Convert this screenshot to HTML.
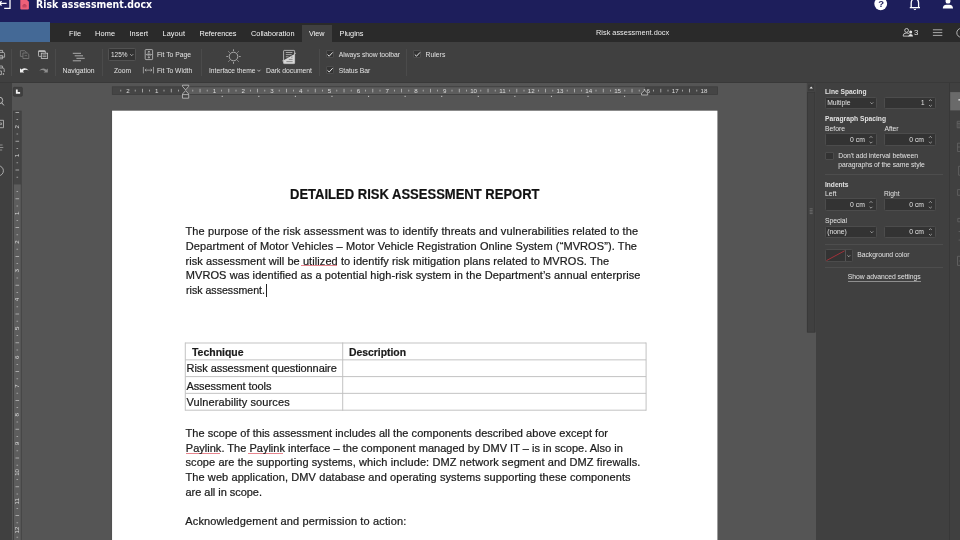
<!DOCTYPE html>
<html lang="en">
<head>
<meta charset="utf-8">
<title>Risk assessment.docx</title>
<style>
html,body{margin:0;padding:0;width:960px;height:540px;overflow:hidden;background:#555555;}
body{position:relative;font-family:"Liberation Sans",sans-serif;font-size:7.33px;color:#e2e2e2;}
#root{position:absolute;left:0;top:0;width:960px;height:540px;overflow:hidden;will-change:transform;}
.abs,.t,.box{position:absolute;}
.t,.doc{transform-origin:0 50%;}
.t{white-space:nowrap;line-height:10px;height:10px;margin-top:-5px;}
.b{font-weight:bold;}
#topbar{left:0;top:0;width:960px;height:22.5px;background:#1d1e5b;}
#tabbar{left:0;top:22.5px;width:960px;height:19.5px;background:#2a2a2a;}
#blue{left:0;top:22.2px;width:50.2px;height:19.8px;background:#446996;}
#toolbar{left:0;top:42px;width:960px;height:39.6px;background:#404040;border-bottom:1.1px solid #393939;}
#activetab{left:302px;top:25px;width:30px;height:17px;background:#404040;}
#leftbar{left:0;top:82.7px;width:11.7px;height:457px;background:#404040;}
#rpanel{left:816px;top:82.7px;width:133px;height:457px;background:#404040;}
#rbar{left:949px;top:82.7px;width:11px;height:457px;background:#404040;border-left:1px solid #383838;}
#page{left:112px;top:111px;width:605.3px;height:429px;background:#ffffff;}
.sep{position:absolute;width:1px;background:#4b4b4b;top:49px;height:26.5px;}
.doc{position:absolute;white-space:nowrap;color:#1c1c1c;-webkit-text-stroke:0.22px #1b1b1b;font-size:11.5px;line-height:15px;height:15px;margin-top:-7.5px;}
.inp{position:absolute;background:#333333;border:1px solid #4c4c4c;border-radius:1.3px;box-sizing:border-box;height:12.6px;}
.hr{position:absolute;height:1px;background:#4d4d4d;left:825px;width:118px;}
.cb{position:absolute;width:8.2px;height:8.2px;box-sizing:border-box;background:#333;border:1px solid #4c4c4c;border-radius:1px;}
</style>
</head>
<body>
<div id="root">
<div id="topbar" class="abs"></div>
<div id="tabbar" class="abs"></div>
<div id="blue" class="abs"></div>
<div id="toolbar" class="abs"></div>
<div id="activetab" class="abs"></div>
<div id="leftbar" class="abs"></div>
<div id="rpanel" class="abs"></div>
<div id="rbar" class="abs"></div>
<svg class="abs" style="left:0;top:0" width="960" height="540" viewBox="0 0 960 540"><rect x="111.7" y="110.3" width="606.1" height="440" fill="#4b4b4b"/><rect x="112.05" y="110.65" width="605.4" height="440" fill="#ffffff"/></svg>
<!-- toolbar separators -->
<div class="sep" style="left:11px"></div>
<div class="sep" style="left:55px"></div>
<div class="sep" style="left:102px"></div>
<div class="sep" style="left:201.3px"></div>
<div class="sep" style="left:319px"></div>
<div class="sep" style="left:405.5px"></div>
<!-- zoom combobox -->
<div class="inp" style="left:108.4px;top:48.2px;width:27.5px;height:13.2px;background:#333;border-color:#525252;"></div>
<!-- toolbar checkboxes -->
<div class="cb" style="left:325.6px;top:50.2px"></div>
<div class="cb" style="left:325.6px;top:66px"></div>
<div class="cb" style="left:413px;top:50.2px"></div>
<!-- right panel inputs -->
<div class="inp" style="left:825px;top:96.6px;width:51.6px"></div>
<div class="inp" style="left:884.4px;top:96.6px;width:51.6px"></div>
<div class="inp" style="left:825px;top:133.4px;width:51.6px"></div>
<div class="inp" style="left:884.4px;top:133.4px;width:51.6px"></div>
<div class="cb" style="left:825.4px;top:151.5px"></div>
<div class="hr" style="top:174.3px"></div>
<div class="inp" style="left:825px;top:198.4px;width:51.6px"></div>
<div class="inp" style="left:884.4px;top:198.4px;width:51.6px"></div>
<div class="inp" style="left:825px;top:225.6px;width:51.6px"></div>
<div class="inp" style="left:884.4px;top:225.6px;width:51.6px"></div>
<div class="hr" style="top:244.3px"></div>
<div class="inp" style="left:825px;top:249.4px;width:27.6px;height:12.6px"></div>
<div class="abs" style="left:845.3px;top:250.4px;width:1px;height:10.6px;background:#555"></div>
<div class="hr" style="top:267.2px"></div>
<div class="abs" style="left:847.8px;top:280.8px;width:72.9px;height:0.7px;background:#8e8e8e"></div>
<!-- table -->
<svg class="abs" style="left:0;top:0" width="960" height="540" viewBox="0 0 960 540" fill="none" stroke="#c0c0c0" stroke-width="0.95">
<path d="M185.3 343 H646.1 M185.3 359.85 H646.1 M185.3 376.6 H646.1 M185.3 393.35 H646.1 M185.3 410.2 H646.1 M185.3 342.5 V410.7 M342.7 342.5 V410.7 M646.1 342.5 V410.7"/>
</svg>
<!-- spelling underlines + caret -->
<div class="abs" style="left:301.2px;top:264.8px;width:35.8px;height:1px;background:#e8858e;"></div>
<div class="abs" style="left:185.5px;top:452.6px;width:34.5px;height:1px;background:#e8858e;"></div>
<div class="abs" style="left:248px;top:452.6px;width:34.5px;height:1px;background:#e8858e;"></div>
<div class="abs" style="left:265.8px;top:283.6px;width:1px;height:13.6px;background:#222;"></div>
<svg class="abs" style="left:0;top:0" width="960" height="540" viewBox="0 0 960 540" fill="none" stroke-linecap="butt">
<!-- top bar: back icon -->
<path d="M-1 3.4 H6.6 M1.6 1.2 L-0.8 3.4 L1.6 5.6" stroke="#ffffff" stroke-width="1.3"/>
<path d="M10 -1 V8.4 H4.2" stroke="#ffffff" stroke-width="1.3"/>
<!-- doc icon -->
<path d="M20.3 -1 H26 L28.9 1.8 V8.4 Q28.9 9.4 27.9 9.4 H21.3 Q20.3 9.4 20.3 8.4 Z" fill="#ee6079"/>
<path d="M23.4 4.5 H25.6 M22.4 5.7 H26.6 M22.4 6.9 H26.6" stroke="#a83450" stroke-width="0.75"/>
<!-- help -->
<circle cx="880.7" cy="3.8" r="6.4" fill="#ffffff"/>
<!-- bell -->
<path d="M911.2 7.6 V3.2 Q911.2 -1.2 914.9 -1.2 Q918.6 -1.2 918.6 3.2 V7.6 M909.8 7.7 H920" stroke="#ffffff" stroke-width="1.3"/>
<path d="M913.7 9 Q914.9 10.4 916.1 9" stroke="#ffffff" stroke-width="1"/>
<!-- user -->
<path d="M942.8 8.6 Q942.8 4.8 946.5 4.8 H949.3 Q953 4.8 953 8.6 Z" fill="#ffffff"/>
<rect x="945.6" y="-2" width="4.8" height="5.6" rx="2.2" fill="#ffffff"/>
<!-- tab bar: users -->
<circle cx="906.6" cy="30.4" r="1.9" stroke="#e4e4e4" stroke-width="0.8"/>
<path d="M903.3 36.2 V35.2 Q903.3 33 906.6 33 Q908.4 33 909.2 33.7 M903.3 36.1 H909" stroke="#e4e4e4" stroke-width="0.8"/>
<circle cx="910.7" cy="31.9" r="1.5" fill="#e4e4e4"/>
<path d="M908.4 36.5 Q908.4 34 910.7 34 Q913 34 913 36.5 Z" fill="#e4e4e4"/>
<!-- hamburger -->
<path d="M932.9 29.8 H942.3 M932.9 32.6 H942.3 M932.9 35.4 H942.3" stroke="#b8b8b8" stroke-width="0.9"/>
<circle cx="961.2" cy="32.8" r="4.4" stroke="#c4c4c4" stroke-width="0.9"/>
<!-- toolbar: print (partial) -->
<path d="M-1 52.4 H3.2 Q4.6 52.4 4.6 53.8 V57.2 H-1 M-1 50.4 H2.6 V52.4 M-1 55.6 H2.6 V58.8 H-1" stroke="#bdbdbd" stroke-width="0.8"/>
<path d="M-1 68 H2.8 Q4.2 68 4.2 69.4 V72 M-1 66 H2.4 V68 M-1 71 H1.4 V74.6 H-1" stroke="#bdbdbd" stroke-width="0.8"/>
<circle cx="3.4" cy="74" r="0.8" fill="#d0d0d0"/>
<!-- copy (dim) -->
<path d="M20.4 50.7 H24.8 L26.2 52.1 V56.4 H20.4 Z" stroke="#7c7c7c" stroke-width="0.8"/>
<path d="M22.9 53 H27.4 L28.8 54.4 V58.5 H22.9 Z" fill="#404040" stroke="#7c7c7c" stroke-width="0.8"/>
<path d="M24.6 55.6 H27" stroke="#7c7c7c" stroke-width="0.7"/>
<!-- paste -->
<rect x="38.5" y="50.6" width="6.8" height="5.8" rx="0.6" stroke="#c6c6c6" stroke-width="0.8"/>
<path d="M38.5 51.4 H45.3" stroke="#c6c6c6" stroke-width="1"/>
<rect x="41.3" y="53.2" width="6.3" height="5.3" fill="#404040" stroke="#c6c6c6" stroke-width="0.8"/>
<path d="M42.6 55 H46.4 M42.6 56.6 H46.4" stroke="#c6c6c6" stroke-width="0.7"/>
<!-- undo -->
<path d="M20 72.4 V68.2 L21.4 69.6 Q25.4 66.4 28.6 70.6 Q25.6 68.6 22.8 71 L24.2 72.4 Z" fill="#f0f0f0"/>
<!-- redo (dim) -->
<path d="M47.8 72.6 V68.4 L46.4 69.8 Q42.4 66.6 39.2 70.8 Q42.2 68.8 45 71.2 L43.6 72.6 Z" fill="#8c8c8c"/>
<!-- navigation -->
<path d="M72.8 53.3 H81 M74.7 55.8 H83 M76.4 58.3 H84.7 M72.8 60.8 H81" stroke="#cfcfcf" stroke-width="0.75"/>
<!-- zoom chevron -->
<path d="M130.2 54.2 L131.7 55.7 L133.2 54.2" stroke="#d0d0d0" stroke-width="0.7"/>
<!-- fit to page -->
<rect x="145.2" y="49.6" width="7.4" height="10" rx="0.7" stroke="#c4c4c4" stroke-width="0.8"/>
<path d="M148.9 51 V58.2 M146.4 54.6 H151.4" stroke="#c4c4c4" stroke-width="0.7"/>
<path d="M147.8 52.2 L148.9 51 L150 52.2 M147.8 57 L148.9 58.2 L150 57 M147.4 53.6 L146.4 54.6 L147.4 55.6 M150.4 53.6 L151.4 54.6 L150.4 55.6" stroke="#c4c4c4" stroke-width="0.65"/>
<!-- fit to width -->
<path d="M143.4 66.9 V73.4 M153.5 66.9 V73.4 M145 70.15 H152 M146.3 68.9 L145 70.15 L146.3 71.4 M150.7 68.9 L152 70.15 L150.7 71.4" stroke="#bcbcbc" stroke-width="0.7"/>
<!-- sun -->
<circle cx="233.5" cy="56.5" r="4.3" stroke="#cccccc" stroke-width="0.75"/>
<path d="M233.5 49.3 V51 M233.5 62 V63.8 M226.3 56.5 H228 M239 56.5 H240.7 M228.4 51.4 L229.6 52.6 M237.4 60.4 L238.6 61.6 M228.4 61.6 L229.6 60.4 M237.4 52.6 L238.6 51.4" stroke="#cccccc" stroke-width="0.7"/>
<path d="M257.4 69.8 L258.9 71.4 L260.4 69.8" stroke="#d4d4d4" stroke-width="0.75"/>
<!-- dark document -->
<path d="M294.6 53.9 V63.6 H283.6 V60.2 Z" fill="#d6d6d6"/>
<rect x="283.6" y="50.4" width="11" height="13.2" rx="0.7" stroke="#cdcdcd" stroke-width="0.8"/>
<path d="M285.8 52.5 H292.4 M285.8 54.6 H291.6 M285.8 56.8 H288.6" stroke="#d0d0d0" stroke-width="0.7"/>
<path d="M286.4 61.6 H292.6 M288.8 59.4 H292.6 M291 57.1 H292.6" stroke="#555555" stroke-width="0.6"/>
<path d="M294.4 53.6 L296 53.2 M283.6 60.4 L282.2 61" stroke="#cdcdcd" stroke-width="0.7"/>
<!-- checks -->
<path d="M327.5 54.6 L329.2 56.2 L332.7 52.4" stroke="#f4f4f4" stroke-width="0.9"/>
<path d="M327.5 70.4 L329.2 72 L332.7 68.2" stroke="#f4f4f4" stroke-width="0.9"/>
<path d="M414.8 54.6 L416.5 56.2 L420 52.4" stroke="#f4f4f4" stroke-width="0.9"/>
<!-- left sidebar icons -->
<circle cx="-0.6" cy="100.4" r="3.3" stroke="#c4c4c4" stroke-width="0.9"/>
<path d="M1.7 102.8 L3.9 105.4" stroke="#c4c4c4" stroke-width="1"/>
<path d="M-1 120.3 H3.5 V127.7 H-1" stroke="#bcbcbc" stroke-width="0.8"/>
<path d="M0 123 H1.6 V124.6 H0" stroke="#bcbcbc" stroke-width="0.7"/>
<path d="M-1 145 H2.6 M-1 147.5 H3.3 M-1 150 H2.2" stroke="#b0b0b0" stroke-width="0.7"/>
<circle cx="-1.6" cy="170.8" r="5" stroke="#c4c4c4" stroke-width="0.8"/>
<!-- right sidebar -->
<rect x="950.2" y="92.1" width="10" height="18.3" fill="#6a6a6a"/>
<path d="M958.4 99.8 H961" stroke="#f0f0f0" stroke-width="1.2"/>
<path d="M961 121.3 H957.2 V127.8 H961 M957.2 123.3 H961 M959 123.3 V127.8" stroke="#6c6c6c" stroke-width="0.7"/>
<path d="M961 143.2 H957.6 V151.5 H961 M957.6 147 H961" stroke="#6c6c6c" stroke-width="0.7"/>
<path d="M961 166.3 H958.6 V175.2 H961" stroke="#6c6c6c" stroke-width="0.7"/>
<path d="M961 189.6 H957.6 V195.3 H961" stroke="#6c6c6c" stroke-width="0.7"/>
<path d="M961 218.4 H957.8 V221.8 H961" stroke="#6c6c6c" stroke-width="0.7"/>
<path d="M958.6 231.5 H961 M958.6 240.1 H961" stroke="#6c6c6c" stroke-width="0.7"/>
<path d="M961 256.3 H957.5 V265.4 H961 M958.8 261 H961" stroke="#6c6c6c" stroke-width="0.7"/>
<!-- scrollbar -->
<rect x="806.8" y="83" width="9" height="249.4" fill="#404040"/>
<rect x="807.6" y="83.9" width="7.1" height="7.3" fill="#3c3c3c" stroke="#4a4a4a" stroke-width="0.6"/>
<path d="M809.5 88.5 L811.2 86.5 L812.9 88.5 Z" fill="#e6e6e6"/>
<rect x="807.6" y="92.5" width="7.1" height="239.6" fill="#404040" stroke="#383838" stroke-width="0.7"/>
<path d="M809.6 208.8 H812.7 M809.6 210.4 H812.7 M809.6 212 H812.7 M809.6 213.6 H812.7" stroke="#787878" stroke-width="0.7"/>
<!-- panel spinners / combos arrows -->
<g stroke="#c8c8c8" stroke-width="0.7">
<path d="M870.4 102.4 L871.8 103.8 L873.2 102.4"/>
<path d="M870.4 231.4 L871.8 232.8 L873.2 231.4"/>
<path d="M847.4 255.3 L848.8 256.7 L850.2 255.3"/>
<path d="M929 101 L930.4 99.6 L931.8 101 M929 105 L930.4 106.4 L931.8 105"/>
<path d="M869.6 137.8 L871 136.4 L872.4 137.8 M869.6 141.8 L871 143.2 L872.4 141.8"/>
<path d="M929 137.8 L930.4 136.4 L931.8 137.8 M929 141.8 L930.4 143.2 L931.8 141.8"/>
<path d="M869.6 202.8 L871 201.4 L872.4 202.8 M869.6 206.8 L871 208.2 L872.4 206.8"/>
<path d="M929 202.8 L930.4 201.4 L931.8 202.8 M929 206.8 L930.4 208.2 L931.8 206.8"/>
<path d="M929 230 L930.4 228.6 L931.8 230 M929 234 L930.4 235.4 L931.8 234"/>
</g>
<!-- no-color swatch -->
<path d="M826.4 260.6 L844.6 250.8" stroke="#d0303c" stroke-width="0.7"/>
</svg>
<div class="t" style="left:878.2px;top:3.9px;font-size:9.5px;font-weight:bold;color:#1e1f5b;">?</div>
<svg class="abs" style="left:0;top:0" width="960" height="540" viewBox="0 0 960 540" font-family="Liberation Sans, sans-serif" font-size="6.2" fill="#dadada" text-anchor="middle">
<rect x="112.3" y="86.8" width="605.3" height="7.6" fill="#454545"/>
<rect x="185.6" y="86.8" width="459.4" height="7.6" fill="#5d5d5d"/>
<rect x="112.3" y="86.8" width="605.3" height="7.6" fill="none" stroke="#3e3e3e" stroke-width="0.8"/>
<rect x="120.40" y="89.7" width="0.8" height="1.8" fill="#c2c2c2" opacity="0.9"/>
<text x="128.0" y="92.8">2</text>
<rect x="134.80" y="89.7" width="0.8" height="1.8" fill="#c2c2c2" opacity="0.9"/>
<rect x="142.05" y="88.8" width="0.75" height="3.6" fill="#c2c2c2"/>
<rect x="149.20" y="89.7" width="0.8" height="1.8" fill="#c2c2c2" opacity="0.9"/>
<text x="156.8" y="92.8">1</text>
<rect x="163.60" y="89.7" width="0.8" height="1.8" fill="#c2c2c2" opacity="0.9"/>
<rect x="170.85" y="88.8" width="0.75" height="3.6" fill="#c2c2c2"/>
<rect x="178.00" y="89.7" width="0.8" height="1.8" fill="#c2c2c2" opacity="0.9"/>
<rect x="192.40" y="89.7" width="0.8" height="1.8" fill="#c2c2c2" opacity="0.9"/>
<rect x="199.65" y="88.8" width="0.75" height="3.6" fill="#c2c2c2"/>
<rect x="206.80" y="89.7" width="0.8" height="1.8" fill="#c2c2c2" opacity="0.9"/>
<text x="214.4" y="92.8">1</text>
<rect x="221.20" y="89.7" width="0.8" height="1.8" fill="#c2c2c2" opacity="0.9"/>
<rect x="228.45" y="88.8" width="0.75" height="3.6" fill="#c2c2c2"/>
<rect x="235.60" y="89.7" width="0.8" height="1.8" fill="#c2c2c2" opacity="0.9"/>
<text x="243.2" y="92.8">2</text>
<rect x="250.00" y="89.7" width="0.8" height="1.8" fill="#c2c2c2" opacity="0.9"/>
<rect x="257.25" y="88.8" width="0.75" height="3.6" fill="#c2c2c2"/>
<rect x="264.40" y="89.7" width="0.8" height="1.8" fill="#c2c2c2" opacity="0.9"/>
<text x="272.0" y="92.8">3</text>
<rect x="278.80" y="89.7" width="0.8" height="1.8" fill="#c2c2c2" opacity="0.9"/>
<rect x="286.05" y="88.8" width="0.75" height="3.6" fill="#c2c2c2"/>
<rect x="293.20" y="89.7" width="0.8" height="1.8" fill="#c2c2c2" opacity="0.9"/>
<text x="300.8" y="92.8">4</text>
<rect x="307.60" y="89.7" width="0.8" height="1.8" fill="#c2c2c2" opacity="0.9"/>
<rect x="314.85" y="88.8" width="0.75" height="3.6" fill="#c2c2c2"/>
<rect x="322.00" y="89.7" width="0.8" height="1.8" fill="#c2c2c2" opacity="0.9"/>
<text x="329.6" y="92.8">5</text>
<rect x="336.40" y="89.7" width="0.8" height="1.8" fill="#c2c2c2" opacity="0.9"/>
<rect x="343.65" y="88.8" width="0.75" height="3.6" fill="#c2c2c2"/>
<rect x="350.80" y="89.7" width="0.8" height="1.8" fill="#c2c2c2" opacity="0.9"/>
<text x="358.4" y="92.8">6</text>
<rect x="365.20" y="89.7" width="0.8" height="1.8" fill="#c2c2c2" opacity="0.9"/>
<rect x="372.45" y="88.8" width="0.75" height="3.6" fill="#c2c2c2"/>
<rect x="379.60" y="89.7" width="0.8" height="1.8" fill="#c2c2c2" opacity="0.9"/>
<text x="387.2" y="92.8">7</text>
<rect x="394.00" y="89.7" width="0.8" height="1.8" fill="#c2c2c2" opacity="0.9"/>
<rect x="401.25" y="88.8" width="0.75" height="3.6" fill="#c2c2c2"/>
<rect x="408.40" y="89.7" width="0.8" height="1.8" fill="#c2c2c2" opacity="0.9"/>
<text x="416.0" y="92.8">8</text>
<rect x="422.80" y="89.7" width="0.8" height="1.8" fill="#c2c2c2" opacity="0.9"/>
<rect x="430.05" y="88.8" width="0.75" height="3.6" fill="#c2c2c2"/>
<rect x="437.20" y="89.7" width="0.8" height="1.8" fill="#c2c2c2" opacity="0.9"/>
<text x="444.8" y="92.8">9</text>
<rect x="451.60" y="89.7" width="0.8" height="1.8" fill="#c2c2c2" opacity="0.9"/>
<rect x="458.85" y="88.8" width="0.75" height="3.6" fill="#c2c2c2"/>
<rect x="466.00" y="89.7" width="0.8" height="1.8" fill="#c2c2c2" opacity="0.9"/>
<text x="473.6" y="92.8">10</text>
<rect x="480.40" y="89.7" width="0.8" height="1.8" fill="#c2c2c2" opacity="0.9"/>
<rect x="487.65" y="88.8" width="0.75" height="3.6" fill="#c2c2c2"/>
<rect x="494.80" y="89.7" width="0.8" height="1.8" fill="#c2c2c2" opacity="0.9"/>
<text x="502.4" y="92.8">11</text>
<rect x="509.20" y="89.7" width="0.8" height="1.8" fill="#c2c2c2" opacity="0.9"/>
<rect x="516.45" y="88.8" width="0.75" height="3.6" fill="#c2c2c2"/>
<rect x="523.60" y="89.7" width="0.8" height="1.8" fill="#c2c2c2" opacity="0.9"/>
<text x="531.2" y="92.8">12</text>
<rect x="538.00" y="89.7" width="0.8" height="1.8" fill="#c2c2c2" opacity="0.9"/>
<rect x="545.25" y="88.8" width="0.75" height="3.6" fill="#c2c2c2"/>
<rect x="552.40" y="89.7" width="0.8" height="1.8" fill="#c2c2c2" opacity="0.9"/>
<text x="560.0" y="92.8">13</text>
<rect x="566.80" y="89.7" width="0.8" height="1.8" fill="#c2c2c2" opacity="0.9"/>
<rect x="574.05" y="88.8" width="0.75" height="3.6" fill="#c2c2c2"/>
<rect x="581.20" y="89.7" width="0.8" height="1.8" fill="#c2c2c2" opacity="0.9"/>
<text x="588.8" y="92.8">14</text>
<rect x="595.60" y="89.7" width="0.8" height="1.8" fill="#c2c2c2" opacity="0.9"/>
<rect x="602.85" y="88.8" width="0.75" height="3.6" fill="#c2c2c2"/>
<rect x="610.00" y="89.7" width="0.8" height="1.8" fill="#c2c2c2" opacity="0.9"/>
<text x="617.6" y="92.8">15</text>
<rect x="624.40" y="89.7" width="0.8" height="1.8" fill="#c2c2c2" opacity="0.9"/>
<rect x="631.65" y="88.8" width="0.75" height="3.6" fill="#c2c2c2"/>
<rect x="638.80" y="89.7" width="0.8" height="1.8" fill="#c2c2c2" opacity="0.9"/>
<text x="646.4" y="92.8">16</text>
<rect x="653.20" y="89.7" width="0.8" height="1.8" fill="#c2c2c2" opacity="0.9"/>
<rect x="660.45" y="88.8" width="0.75" height="3.6" fill="#c2c2c2"/>
<rect x="667.60" y="89.7" width="0.8" height="1.8" fill="#c2c2c2" opacity="0.9"/>
<text x="675.2" y="92.8">17</text>
<rect x="682.00" y="89.7" width="0.8" height="1.8" fill="#c2c2c2" opacity="0.9"/>
<rect x="689.25" y="88.8" width="0.75" height="3.6" fill="#c2c2c2"/>
<rect x="696.40" y="89.7" width="0.8" height="1.8" fill="#c2c2c2" opacity="0.9"/>
<text x="704.0" y="92.8">18</text>
<rect x="221.68" y="95.8" width="1.1" height="1.2" fill="#bdbdbd"/>
<rect x="258.26" y="95.8" width="1.1" height="1.2" fill="#bdbdbd"/>
<rect x="294.84" y="95.8" width="1.1" height="1.2" fill="#bdbdbd"/>
<rect x="331.42" y="95.8" width="1.1" height="1.2" fill="#bdbdbd"/>
<rect x="368.00" y="95.8" width="1.1" height="1.2" fill="#bdbdbd"/>
<rect x="404.58" y="95.8" width="1.1" height="1.2" fill="#bdbdbd"/>
<rect x="441.16" y="95.8" width="1.1" height="1.2" fill="#bdbdbd"/>
<rect x="477.74" y="95.8" width="1.1" height="1.2" fill="#bdbdbd"/>
<rect x="514.32" y="95.8" width="1.1" height="1.2" fill="#bdbdbd"/>
<rect x="550.90" y="95.8" width="1.1" height="1.2" fill="#bdbdbd"/>
<rect x="587.48" y="95.8" width="1.1" height="1.2" fill="#bdbdbd"/>
<rect x="624.06" y="95.8" width="1.1" height="1.2" fill="#bdbdbd"/>
<path d="M182.5 85.2 H188.7 V86.4 L185.6 89.9 L182.5 86.4 Z" fill="#454545" stroke="#c4c4c4" stroke-width="0.8" stroke-linejoin="round"/>
<path d="M185.6 90.6 L188.7 94 V98.2 H182.5 V94 Z" fill="#454545" stroke="#c4c4c4" stroke-width="0.8" stroke-linejoin="round"/>
<path d="M182.5 94.6 H188.7" stroke="#c4c4c4" stroke-width="0.8"/>
<path d="M644.6 90.3 L647.7 93.2 V95 H641.5 V93.2 Z" fill="#454545" stroke="#c4c4c4" stroke-width="0.8" stroke-linejoin="round"/>
<rect x="13.4" y="111.1" width="7.8" height="428.9" fill="#5d5d5d"/>
<rect x="13.4" y="111.1" width="7.8" height="73.3" fill="#454545"/>
<rect x="13.4" y="111.1" width="7.8" height="433.9" fill="none" stroke="#3e3e3e" stroke-width="0.8"/>
<rect x="15.50" y="112.03" width="3.6" height="0.75" fill="#c2c2c2"/>
<rect x="16.50" y="119.20" width="1.6" height="0.8" fill="#c2c2c2" opacity="0.85"/>
<text transform="translate(19.45 126.8) rotate(-90)" x="0" y="0">2</text>
<rect x="16.50" y="133.60" width="1.6" height="0.8" fill="#c2c2c2" opacity="0.85"/>
<rect x="15.50" y="140.83" width="3.6" height="0.75" fill="#c2c2c2"/>
<rect x="16.50" y="148.00" width="1.6" height="0.8" fill="#c2c2c2" opacity="0.85"/>
<text transform="translate(19.45 155.6) rotate(-90)" x="0" y="0">1</text>
<rect x="16.50" y="162.40" width="1.6" height="0.8" fill="#c2c2c2" opacity="0.85"/>
<rect x="15.50" y="169.63" width="3.6" height="0.75" fill="#c2c2c2"/>
<rect x="16.50" y="176.80" width="1.6" height="0.8" fill="#c2c2c2" opacity="0.85"/>
<rect x="16.50" y="191.20" width="1.6" height="0.8" fill="#c2c2c2" opacity="0.85"/>
<rect x="15.50" y="198.43" width="3.6" height="0.75" fill="#c2c2c2"/>
<rect x="16.50" y="205.60" width="1.6" height="0.8" fill="#c2c2c2" opacity="0.85"/>
<text transform="translate(19.45 213.2) rotate(-90)" x="0" y="0">1</text>
<rect x="16.50" y="220.00" width="1.6" height="0.8" fill="#c2c2c2" opacity="0.85"/>
<rect x="15.50" y="227.23" width="3.6" height="0.75" fill="#c2c2c2"/>
<rect x="16.50" y="234.40" width="1.6" height="0.8" fill="#c2c2c2" opacity="0.85"/>
<text transform="translate(19.45 242.0) rotate(-90)" x="0" y="0">2</text>
<rect x="16.50" y="248.80" width="1.6" height="0.8" fill="#c2c2c2" opacity="0.85"/>
<rect x="15.50" y="256.03" width="3.6" height="0.75" fill="#c2c2c2"/>
<rect x="16.50" y="263.20" width="1.6" height="0.8" fill="#c2c2c2" opacity="0.85"/>
<text transform="translate(19.45 270.8) rotate(-90)" x="0" y="0">3</text>
<rect x="16.50" y="277.60" width="1.6" height="0.8" fill="#c2c2c2" opacity="0.85"/>
<rect x="15.50" y="284.83" width="3.6" height="0.75" fill="#c2c2c2"/>
<rect x="16.50" y="292.00" width="1.6" height="0.8" fill="#c2c2c2" opacity="0.85"/>
<text transform="translate(19.45 299.6) rotate(-90)" x="0" y="0">4</text>
<rect x="16.50" y="306.40" width="1.6" height="0.8" fill="#c2c2c2" opacity="0.85"/>
<rect x="15.50" y="313.63" width="3.6" height="0.75" fill="#c2c2c2"/>
<rect x="16.50" y="320.80" width="1.6" height="0.8" fill="#c2c2c2" opacity="0.85"/>
<text transform="translate(19.45 328.4) rotate(-90)" x="0" y="0">5</text>
<rect x="16.50" y="335.20" width="1.6" height="0.8" fill="#c2c2c2" opacity="0.85"/>
<rect x="15.50" y="342.43" width="3.6" height="0.75" fill="#c2c2c2"/>
<rect x="16.50" y="349.60" width="1.6" height="0.8" fill="#c2c2c2" opacity="0.85"/>
<text transform="translate(19.45 357.2) rotate(-90)" x="0" y="0">6</text>
<rect x="16.50" y="364.00" width="1.6" height="0.8" fill="#c2c2c2" opacity="0.85"/>
<rect x="15.50" y="371.23" width="3.6" height="0.75" fill="#c2c2c2"/>
<rect x="16.50" y="378.40" width="1.6" height="0.8" fill="#c2c2c2" opacity="0.85"/>
<text transform="translate(19.45 386.0) rotate(-90)" x="0" y="0">7</text>
<rect x="16.50" y="392.80" width="1.6" height="0.8" fill="#c2c2c2" opacity="0.85"/>
<rect x="15.50" y="400.03" width="3.6" height="0.75" fill="#c2c2c2"/>
<rect x="16.50" y="407.20" width="1.6" height="0.8" fill="#c2c2c2" opacity="0.85"/>
<text transform="translate(19.45 414.8) rotate(-90)" x="0" y="0">8</text>
<rect x="16.50" y="421.60" width="1.6" height="0.8" fill="#c2c2c2" opacity="0.85"/>
<rect x="15.50" y="428.83" width="3.6" height="0.75" fill="#c2c2c2"/>
<rect x="16.50" y="436.00" width="1.6" height="0.8" fill="#c2c2c2" opacity="0.85"/>
<text transform="translate(19.45 443.6) rotate(-90)" x="0" y="0">9</text>
<rect x="16.50" y="450.40" width="1.6" height="0.8" fill="#c2c2c2" opacity="0.85"/>
<rect x="15.50" y="457.63" width="3.6" height="0.75" fill="#c2c2c2"/>
<rect x="16.50" y="464.80" width="1.6" height="0.8" fill="#c2c2c2" opacity="0.85"/>
<text transform="translate(19.45 472.4) rotate(-90)" x="0" y="0">10</text>
<rect x="16.50" y="479.20" width="1.6" height="0.8" fill="#c2c2c2" opacity="0.85"/>
<rect x="15.50" y="486.43" width="3.6" height="0.75" fill="#c2c2c2"/>
<rect x="16.50" y="493.60" width="1.6" height="0.8" fill="#c2c2c2" opacity="0.85"/>
<text transform="translate(19.45 501.2) rotate(-90)" x="0" y="0">11</text>
<rect x="16.50" y="508.00" width="1.6" height="0.8" fill="#c2c2c2" opacity="0.85"/>
<rect x="15.50" y="515.23" width="3.6" height="0.75" fill="#c2c2c2"/>
<rect x="16.50" y="522.40" width="1.6" height="0.8" fill="#c2c2c2" opacity="0.85"/>
<text transform="translate(19.45 530.0) rotate(-90)" x="0" y="0">12</text>
<rect x="16.50" y="536.80" width="1.6" height="0.8" fill="#c2c2c2" opacity="0.85"/>
<rect x="13.4" y="87.3" width="8.9" height="8.9" rx="0.8" fill="#404040" stroke="#393939" stroke-width="0.8"/>
<path d="M15.9 89.6 H17.7 V92 H20.1 V93.8 H15.9 Z" fill="#f2f2f2"/>
</svg>
<header id="app-header">
<div class="t" style="left:36.00px;top:3.90px;font-size:10.4px;letter-spacing:0.011px;font-family:'DejaVu Sans Condensed','Liberation Sans',sans-serif;font-weight:bold;color:#ffffff;">Risk assessment.docx</div>
</header>
<nav id="tabs">
<div class="t" style="left:69.00px;top:33.60px;font-size:7.33px;letter-spacing:0.062px;color:#f6f6f6;">File</div>
<div class="t" style="left:95.00px;top:33.60px;font-size:7.33px;letter-spacing:0.146px;color:#f6f6f6;">Home</div>
<div class="t" style="left:129.50px;top:33.60px;font-size:7.33px;letter-spacing:0.034px;color:#f6f6f6;">Insert</div>
<div class="t" style="left:162.50px;top:33.60px;font-size:7.33px;letter-spacing:0.097px;color:#f6f6f6;">Layout</div>
<div class="t" style="left:199.50px;top:33.60px;font-size:7.33px;letter-spacing:-0.054px;color:#f6f6f6;">References</div>
<div class="t" style="left:251.00px;top:33.60px;font-size:7.33px;letter-spacing:0.026px;color:#f6f6f6;">Collaboration</div>
<div class="t" style="left:309.00px;top:33.60px;font-size:7.33px;transform:scaleX(0.9832);color:#f6f6f6;">View</div>
<div class="t" style="left:339.50px;top:33.60px;font-size:7.33px;letter-spacing:-0.008px;color:#f6f6f6;">Plugins</div>
<div class="t" style="left:595.80px;top:33.30px;font-size:7.8px;transform:scaleX(0.9438);color:#ececec;">Risk assessment.docx</div>
<div class="t" style="left:914.00px;top:33.30px;font-size:7.8px;letter-spacing:-0.044px;color:#e6e6e6;">3</div>
</nav>
<section id="view-toolbar">
<div class="t" style="left:62.50px;top:70.80px;font-size:6.8px;letter-spacing:-0.014px;">Navigation</div>
<div class="t" style="left:110.80px;top:54.70px;font-size:7.1px;transform:scaleX(0.9143);">125%</div>
<div class="t" style="left:114.00px;top:70.80px;font-size:6.8px;transform:scaleX(0.9784);">Zoom</div>
<div class="t" style="left:157.00px;top:54.60px;font-size:6.8px;letter-spacing:-0.027px;">Fit To Page</div>
<div class="t" style="left:157.10px;top:70.90px;font-size:6.8px;transform:scaleX(0.9842);">Fit To Width</div>
<div class="t" style="left:208.50px;top:70.80px;font-size:6.8px;transform:scaleX(0.9845);">Interface theme</div>
<div class="t" style="left:266.00px;top:70.80px;font-size:6.8px;letter-spacing:-0.008px;">Dark document</div>
<div class="t" style="left:338.80px;top:54.60px;font-size:6.8px;letter-spacing:-0.043px;">Always show toolbar</div>
<div class="t" style="left:338.80px;top:71.00px;font-size:6.8px;letter-spacing:-0.037px;">Status Bar</div>
<div class="t" style="left:425.50px;top:54.60px;font-size:6.8px;letter-spacing:0.032px;">Rulers</div>
</section>
<aside id="paragraph-settings">
<div class="t" style="left:825.00px;top:91.60px;font-size:6.8px;transform:scaleX(0.9808);font-weight:bold;">Line Spacing</div>
<div class="t" style="left:827.20px;top:102.90px;font-size:6.8px;letter-spacing:-0.017px;">Multiple</div>
<div class="t" style="left:920.50px;top:102.90px;font-size:6.8px;transform:scaleX(0.9256);">1</div>
<div class="t" style="left:825.00px;top:119.00px;font-size:6.8px;transform:scaleX(0.9846);font-weight:bold;">Paragraph Spacing</div>
<div class="t" style="left:825.00px;top:128.90px;font-size:6.8px;letter-spacing:-0.006px;">Before</div>
<div class="t" style="left:884.40px;top:128.90px;font-size:6.8px;letter-spacing:-0.040px;">After</div>
<div class="t" style="left:850.00px;top:139.70px;font-size:6.8px;letter-spacing:0.089px;">0 cm</div>
<div class="t" style="left:909.30px;top:139.70px;font-size:6.8px;letter-spacing:-0.011px;">0 cm</div>
<div class="t" style="left:838.30px;top:155.60px;font-size:6.8px;letter-spacing:-0.023px;">Don't add interval between</div>
<div class="t" style="left:838.30px;top:165.00px;font-size:6.8px;letter-spacing:-0.043px;">paragraphs of the same style</div>
<div class="t" style="left:825.00px;top:184.50px;font-size:6.8px;transform:scaleX(0.9722);font-weight:bold;">Indents</div>
<div class="t" style="left:825.00px;top:193.60px;font-size:6.8px;letter-spacing:0.052px;">Left</div>
<div class="t" style="left:884.40px;top:193.60px;font-size:6.8px;transform:scaleX(0.9827);">Right</div>
<div class="t" style="left:850.00px;top:204.80px;font-size:6.8px;letter-spacing:0.089px;">0 cm</div>
<div class="t" style="left:909.30px;top:204.80px;font-size:6.8px;letter-spacing:-0.011px;">0 cm</div>
<div class="t" style="left:825.00px;top:220.70px;font-size:6.8px;letter-spacing:-0.049px;">Special</div>
<div class="t" style="left:827.20px;top:231.90px;font-size:6.8px;letter-spacing:-0.011px;">(none)</div>
<div class="t" style="left:909.30px;top:231.90px;font-size:6.8px;letter-spacing:-0.011px;">0 cm</div>
<div class="t" style="left:857.30px;top:255.00px;font-size:6.8px;letter-spacing:-0.047px;">Background color</div>
<div class="t" style="left:847.80px;top:276.50px;font-size:6.8px;letter-spacing:-0.037px;">Show advanced settings</div>
</aside>
<main id="document">
<div class="doc" style="left:290.40px;top:194.50px;font-size:14.3px;transform:scaleX(0.9107);font-weight:bold;color:#111111;">DETAILED RISK ASSESSMENT REPORT</div>
<div class="doc" style="left:185.50px;top:231.60px;font-size:11px;letter-spacing:0.114px;color:#1b1b1b;">The purpose of the risk assessment was to identify threats and vulnerabilities related to the</div>
<div class="doc" style="left:185.80px;top:246.30px;font-size:11px;letter-spacing:0.096px;color:#1b1b1b;">Department of Motor Vehicles – Motor Vehicle Registration Online System (“MVROS”). The</div>
<div class="doc" style="left:185.50px;top:261.10px;font-size:11px;letter-spacing:0.078px;color:#1b1b1b;">risk assessment will be utilized to identify risk mitigation plans related to MVROS. The</div>
<div class="doc" style="left:185.80px;top:275.90px;font-size:11px;letter-spacing:0.081px;color:#1b1b1b;">MVROS was identified as a potential high-risk system in the Department’s annual enterprise</div>
<div class="doc" style="left:185.50px;top:290.60px;font-size:11px;transform:scaleX(0.9643);color:#1b1b1b;">risk assessment.</div>
<div class="doc" style="left:192.20px;top:352.20px;font-size:11px;transform:scaleX(0.9520);font-weight:bold;color:#1b1b1b;">Technique</div>
<div class="doc" style="left:349.30px;top:352.20px;font-size:11px;transform:scaleX(0.9419);font-weight:bold;color:#1b1b1b;">Description</div>
<div class="doc" style="left:186.60px;top:368.20px;font-size:11px;letter-spacing:-0.073px;color:#1b1b1b;">Risk assessment questionnaire</div>
<div class="doc" style="left:186.40px;top:386.20px;font-size:11px;letter-spacing:-0.074px;color:#1b1b1b;">Assessment tools</div>
<div class="doc" style="left:186.40px;top:402.20px;font-size:11px;letter-spacing:0.110px;color:#1b1b1b;">Vulnerability sources</div>
<div class="doc" style="left:185.50px;top:433.20px;font-size:11px;letter-spacing:0.037px;color:#1b1b1b;">The scope of this assessment includes all the components described above except for</div>
<div class="doc" style="left:185.80px;top:448.00px;font-size:11px;letter-spacing:0.017px;color:#1b1b1b;">Paylink. The Paylink interface – the component managed by DMV IT – is in scope. Also in</div>
<div class="doc" style="left:185.50px;top:462.90px;font-size:11px;letter-spacing:0.085px;color:#1b1b1b;">scope are the supporting systems, which include: DMZ network segment and DMZ firewalls.</div>
<div class="doc" style="left:185.50px;top:477.90px;font-size:11px;letter-spacing:0.089px;color:#1b1b1b;">The web application, DMV database and operating systems supporting these components</div>
<div class="doc" style="left:185.50px;top:492.50px;font-size:11px;letter-spacing:-0.034px;color:#1b1b1b;">are all in scope.</div>
<div class="doc" style="left:185.30px;top:521.70px;font-size:11px;letter-spacing:0.144px;color:#1b1b1b;">Acknowledgement and permission to action:</div>
</main>
</div>
</body>
</html>
